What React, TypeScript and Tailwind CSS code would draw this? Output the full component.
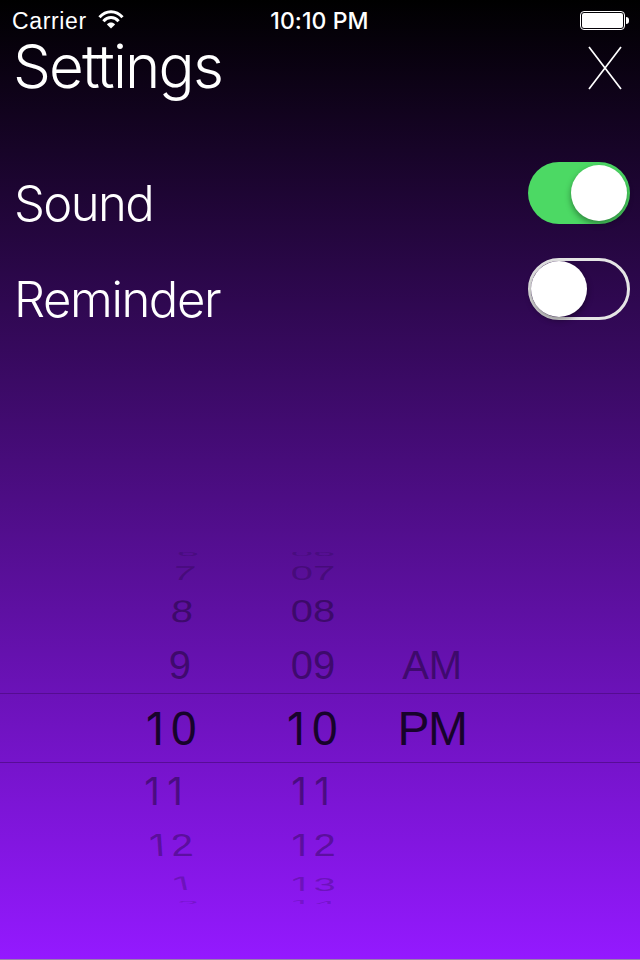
type Cell = { text: string; className: string };

// Vertical slices of the wheel, from the far top edge to the far bottom edge.
const rows = [
  "h-2 overflow-hidden text-[#2a0850]/30",
  "h-[26px] text-[#1c0433]/30",
  "h-[51px] text-[#1c0433]/50",
  "h-[57px] text-[#1c0433]/55",
  "h-[68px] text-[#17032b]",
  "h-[58px] text-[#1c0433]/50",
  "h-[50px] text-[#1c0433]/40",
  "h-[27px] text-[#1c0433]/25",
  "h-[7px] overflow-hidden text-[#1c0433]/20",
];

const hours: Cell[] = [
  { text: "6", className: "mr-[1px] -mt-[6px] scale-y-[0.2]" },
  { text: "7", className: "mr-[5px] -mt-[1px] scale-y-[0.5] -skew-x-[6deg]" },
  { text: "8", className: "mr-[7px] -mt-[2px] scale-y-[0.78] -skew-x-[3deg]" },
  { text: "9", className: "mr-[9px] -mt-[2px]" },
  { text: "10", className: "mr-[7px] scale-x-[1.15] scale-y-[1.18]" },
  { text: "11", className: "mr-[11px] scale-y-[0.98]" },
  { text: "12", className: "mr-[7px] scale-y-[0.79] skew-x-[3deg]" },
  { text: "1", className: "mr-[5px] scale-y-[0.48] skew-x-[6deg]" },
  { text: "2", className: "mr-[1px] mt-[5px] scale-y-[0.2]" },
];

const minutes: Cell[] = [
  { text: "06", className: "-mt-[6px] scale-y-[0.2]" },
  { text: "07", className: "-mt-[1px] scale-y-[0.5]" },
  { text: "08", className: "-mt-[2px] scale-y-[0.78]" },
  { text: "09", className: "-mt-[2px]" },
  { text: "10", className: "mr-[2px] scale-x-[1.15] scale-y-[1.18]" },
  { text: "11", className: "scale-y-[0.98]" },
  { text: "12", className: "scale-y-[0.79]" },
  { text: "13", className: "scale-y-[0.48]" },
  { text: "14", className: "mt-[5px] scale-y-[0.2]" },
];

const periods: Cell[] = [
  { text: "", className: "" },
  { text: "", className: "" },
  { text: "", className: "" },
  { text: "AM", className: "-mt-[2px] text-[40px] tracking-[-0.2px]" },
  { text: "PM", className: "mt-[2px] text-[48px] tracking-[-1.5px]" },
];

// The numeral one comes from Inter, whose glyph has no foot.
function Glyphs({ text }: { text: string }) {
  return (
    <>
      {text.split("").map((c, i) =>
        c === "1" ? (
          <span key={i} className="inline-block w-[23px] pr-[5px] text-center font-['Inter',sans-serif] text-[0.96em] leading-none">
            1
          </span>
        ) : (
          <span key={i}>{c}</span>
        ),
      )}
    </>
  );
}

function Wheel({ cells, className, align }: { cells: Cell[]; className: string; align: string }) {
  return (
    <div className={`flex flex-col ${className}`}>
      {cells.map((cell, i) => (
        <div key={i} className={`flex shrink-0 items-center ${align} ${rows[i]}`}>
          <span className={`flex shrink-0 items-baseline leading-none ${cell.className}`}>
            <Glyphs text={cell.text} />
          </span>
        </div>
      ))}
    </div>
  );
}

function StatusBar() {
  return (
    <header className="flex h-10 items-center justify-between pl-3 pr-[11px] leading-none">
      <div className="flex w-[200px] items-center gap-[11px]">
        <span className="mt-[2px] text-[23px] tracking-[0.65px]">Carrier</span>
        <svg width="26" height="20" viewBox="0 0 26 20" fill="none" stroke="white" strokeWidth="3">
          <path d="M1.5 7.2C8-0.2 18-0.2 24.5 7.2" />
          <path d="M5.4 11.2C9.8 6.4 16.2 6.4 20.6 11.2" />
          <path d="M13 18.6 8.9 14.4C11.3 12 14.7 12 17.1 14.4Z" fill="white" stroke="none" />
        </svg>
      </div>
      <span className="mt-[2px] mr-[2px] font-['Inter',sans-serif] text-[23px] font-medium tracking-[0.1px]">10:10 PM</span>
      <div className="flex w-[200px] items-center justify-end gap-[1px]">
        <div className="h-[19px] w-[45px] rounded-[4px] border border-white p-[1px]">
          <div className="h-full w-full rounded-[2px] bg-white" />
        </div>
        <div className="h-[7px] w-[3px] rounded-r-full bg-white" />
      </div>
    </header>
  );
}

function Toggle({ on }: { on: boolean }) {
  return (
    <div
      role="switch"
      aria-checked={on}
      className={`flex h-[62px] w-[102px] items-center rounded-full ${
        on ? "justify-end bg-[#4cd964] pr-[3px]" : "border-[3px] border-[#e5e5e5]"
      }`}
    >
      <div className="h-14 w-14 rounded-full bg-white shadow-[0_3px_6px_rgba(0,0,0,0.4)]" />
    </div>
  );
}

export default function App() {
  return (
    <main className="flex h-[960px] w-[640px] flex-col overflow-hidden border-b border-[#9a80ae] bg-linear-to-b/srgb from-black to-[#9419ff] font-['Liberation_Sans',Arial,sans-serif] text-white">
      <StatusBar />
      <div className="flex h-[56px] items-center justify-between pl-[13px] pr-[18px]">
        <h1 className="-mt-[4px] font-['Inter',sans-serif] text-[60px] font-light leading-[56px] tracking-[-1.8px]">Settings</h1>
        <svg className="-mt-[1px]" width="34" height="44" viewBox="0 0 34 44" stroke="white" strokeWidth="1.7">
          <path d="M1 1 33 43M33 1 1 43" />
        </svg>
      </div>
      <section className="mt-[66px] flex flex-col gap-[34px] pl-[14px] pr-[10px] font-['Inter',sans-serif] text-[49px] font-light leading-[60px]">
        <div className="flex h-[62px] items-start justify-between">
          <span className="mt-[12px] tracking-[-1.6px]">Sound</span>
          <Toggle on />
        </div>
        <div className="flex h-[62px] items-start justify-between">
          <span className="mt-[12px] tracking-[-1.4px]">Reminder</span>
          <Toggle on={false} />
        </div>
      </section>
      <section className="mt-[232px] grid h-[352px] grid-cols-[1fr] grid-rows-[1fr] text-[40px]">
        <div className="col-start-1 row-start-1 mt-[141px] h-[70px] border-y border-[#4b0a80]/70" />
        <div className="col-start-1 row-start-1 flex">
          <Wheel cells={hours} className="w-[200px]" align="justify-end" />
          <Wheel cells={minutes} className="ml-[63px] w-[100px]" align="justify-center" />
          <Wheel cells={periods} className="ml-[19px] w-[100px]" align="justify-center" />
        </div>
      </section>
    </main>
  );
}
